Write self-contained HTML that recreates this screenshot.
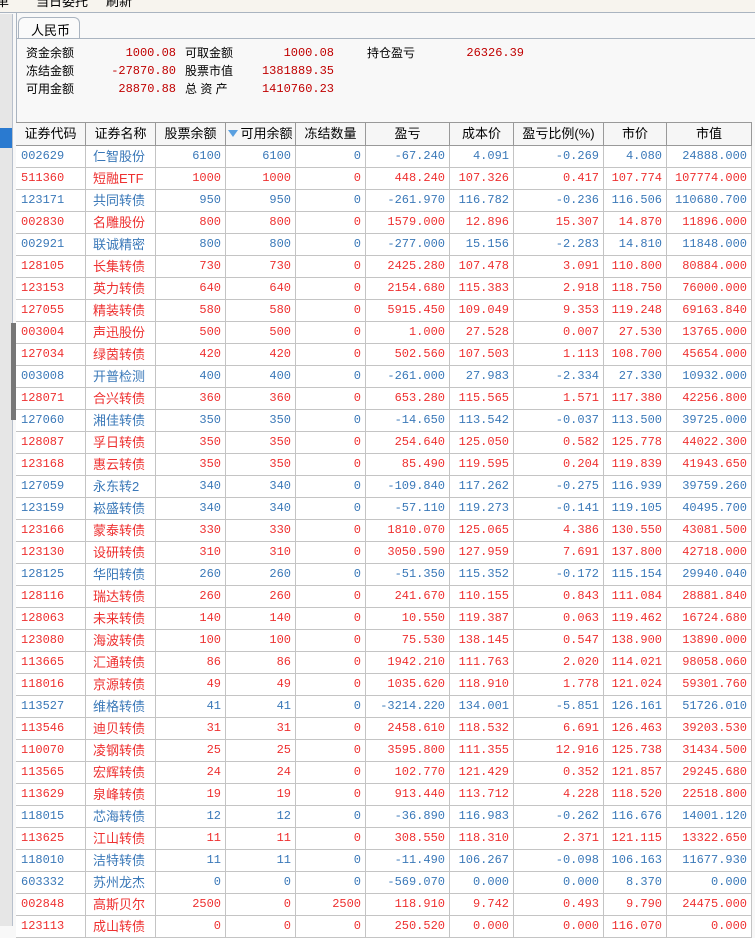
<!DOCTYPE html>
<html><head><meta charset="utf-8"><style>
*{margin:0;padding:0;box-sizing:border-box}
body{width:755px;height:926px;overflow:hidden;background:#f8f8f8;font-family:"Liberation Mono","Noto Sans CJK SC",monospace;font-size:12px;position:relative}
.top{position:absolute;left:0;top:0;width:755px;height:13px;background:#f7f4ee;border-bottom:1px solid #aab4c0;overflow:hidden}
.top span{position:absolute;top:-9px;font-family:"Liberation Sans","Noto Sans CJK SC",sans-serif;font-size:13px;color:#000}
.side{position:absolute;left:0;top:14px;width:13px;height:912px;background:#e6e6e6;border-right:1px solid #b8c0cc}
.blue{position:absolute;left:0;top:114px;width:12px;height:20px;background:#2a7ad0}
.handle{position:absolute;left:11px;top:323px;width:5px;height:97px;background:#777}
.main{position:absolute;left:16px;top:13px;width:739px;height:913px;background:#f8f8f8;border-left:1px solid #aab4c0}
.tab{position:absolute;left:18px;top:17px;width:62px;height:22px;border:1px solid #aab4c0;border-bottom:none;border-radius:6px 6px 0 0;background:#fafafa;font-family:"Liberation Sans","Noto Sans CJK SC",sans-serif;font-size:13px;padding:2px 0 0 12px}
.tabline{position:absolute;left:16px;top:38px;width:739px;height:1px;background:#aab4c0}
.s{position:absolute;font-family:"Liberation Sans","Noto Sans CJK SC",sans-serif;font-size:12px;color:#000;line-height:18px}
.v{position:absolute;color:#c00000;line-height:18px;text-align:right;width:100px}
table{position:absolute;left:16px;top:122px;width:736px;border-collapse:separate;border-spacing:0;table-layout:fixed;background:#fff}
td,th{height:22px;line-height:21px;border-right:1px solid #c4c4c4;border-bottom:1px solid #c4c4c4;white-space:nowrap;overflow:hidden;padding:0 4px;text-align:right;font-weight:normal}
th{background:#f6f6f6;text-align:center;border-top:1px solid #999;border-bottom:1px solid #999;border-right:1px solid #999;height:24px;line-height:22px;font-family:"Liberation Sans","Noto Sans CJK SC",sans-serif;font-size:13px;color:#000;padding:0}
td:nth-child(1){text-align:left;padding-left:5px}
td:nth-child(2){text-align:left;padding-left:7px;font-family:"Liberation Sans","Noto Sans CJK SC",sans-serif;font-size:13px}
tr.b td{color:#3a78b8}
tr.r td{color:#ee3030}
.tri{display:inline-block;width:0;height:0;border-left:5px solid transparent;border-right:5px solid transparent;border-top:7px solid #5aa0e0;margin-right:2px;vertical-align:1px}
</style></head><body>
<div class="top"><span style="left:-4px">单</span><span style="left:36px">当日委托</span><span style="left:106px">刷新</span></div>
<div class="side"><div class="blue"></div></div>
<div class="main"></div>
<div class="handle"></div>
<div class="tab">人民币</div>
<div class="tabline"></div>
<div class="s" style="left:26px;top:44px">资金余额</div><div class="v" style="left:76px;top:44px">1000.08</div>
<div class="s" style="left:185px;top:44px">可取金额</div><div class="v" style="left:234px;top:44px">1000.08</div>
<div class="s" style="left:367px;top:44px">持仓盈亏</div><div class="v" style="left:424px;top:44px;text-align:right">26326.39</div>
<div class="s" style="left:26px;top:62px">冻结金额</div><div class="v" style="left:76px;top:62px">-27870.80</div>
<div class="s" style="left:185px;top:62px">股票市值</div><div class="v" style="left:234px;top:62px">1381889.35</div>
<div class="s" style="left:26px;top:80px">可用金额</div><div class="v" style="left:76px;top:80px">28870.88</div>
<div class="s" style="left:185px;top:80px">总 资 产</div><div class="v" style="left:234px;top:80px">1410760.23</div>
<table>
<colgroup><col style="width:70px"><col style="width:70px"><col style="width:70px"><col style="width:70px"><col style="width:70px"><col style="width:84px"><col style="width:64px"><col style="width:90px"><col style="width:63px"><col style="width:85px"></colgroup>
<tr><th style="width:70px">证券代码</th><th style="width:70px">证券名称</th><th style="width:70px">股票余额</th><th style="width:70px"><span class="tri"></span>可用余额</th><th style="width:70px">冻结数量</th><th style="width:84px">盈亏</th><th style="width:64px">成本价</th><th style="width:90px">盈亏比例(%)</th><th style="width:63px">市价</th><th style="width:85px">市值</th></tr>
<tr class="b"><td>002629</td><td>仁智股份</td><td>6100</td><td>6100</td><td>0</td><td>-67.240</td><td>4.091</td><td>-0.269</td><td>4.080</td><td>24888.000</td></tr>
<tr class="r"><td>511360</td><td>短融ETF</td><td>1000</td><td>1000</td><td>0</td><td>448.240</td><td>107.326</td><td>0.417</td><td>107.774</td><td>107774.000</td></tr>
<tr class="b"><td>123171</td><td>共同转债</td><td>950</td><td>950</td><td>0</td><td>-261.970</td><td>116.782</td><td>-0.236</td><td>116.506</td><td>110680.700</td></tr>
<tr class="r"><td>002830</td><td>名雕股份</td><td>800</td><td>800</td><td>0</td><td>1579.000</td><td>12.896</td><td>15.307</td><td>14.870</td><td>11896.000</td></tr>
<tr class="b"><td>002921</td><td>联诚精密</td><td>800</td><td>800</td><td>0</td><td>-277.000</td><td>15.156</td><td>-2.283</td><td>14.810</td><td>11848.000</td></tr>
<tr class="r"><td>128105</td><td>长集转债</td><td>730</td><td>730</td><td>0</td><td>2425.280</td><td>107.478</td><td>3.091</td><td>110.800</td><td>80884.000</td></tr>
<tr class="r"><td>123153</td><td>英力转债</td><td>640</td><td>640</td><td>0</td><td>2154.680</td><td>115.383</td><td>2.918</td><td>118.750</td><td>76000.000</td></tr>
<tr class="r"><td>127055</td><td>精装转债</td><td>580</td><td>580</td><td>0</td><td>5915.450</td><td>109.049</td><td>9.353</td><td>119.248</td><td>69163.840</td></tr>
<tr class="r"><td>003004</td><td>声迅股份</td><td>500</td><td>500</td><td>0</td><td>1.000</td><td>27.528</td><td>0.007</td><td>27.530</td><td>13765.000</td></tr>
<tr class="r"><td>127034</td><td>绿茵转债</td><td>420</td><td>420</td><td>0</td><td>502.560</td><td>107.503</td><td>1.113</td><td>108.700</td><td>45654.000</td></tr>
<tr class="b"><td>003008</td><td>开普检测</td><td>400</td><td>400</td><td>0</td><td>-261.000</td><td>27.983</td><td>-2.334</td><td>27.330</td><td>10932.000</td></tr>
<tr class="r"><td>128071</td><td>合兴转债</td><td>360</td><td>360</td><td>0</td><td>653.280</td><td>115.565</td><td>1.571</td><td>117.380</td><td>42256.800</td></tr>
<tr class="b"><td>127060</td><td>湘佳转债</td><td>350</td><td>350</td><td>0</td><td>-14.650</td><td>113.542</td><td>-0.037</td><td>113.500</td><td>39725.000</td></tr>
<tr class="r"><td>128087</td><td>孚日转债</td><td>350</td><td>350</td><td>0</td><td>254.640</td><td>125.050</td><td>0.582</td><td>125.778</td><td>44022.300</td></tr>
<tr class="r"><td>123168</td><td>惠云转债</td><td>350</td><td>350</td><td>0</td><td>85.490</td><td>119.595</td><td>0.204</td><td>119.839</td><td>41943.650</td></tr>
<tr class="b"><td>127059</td><td>永东转2</td><td>340</td><td>340</td><td>0</td><td>-109.840</td><td>117.262</td><td>-0.275</td><td>116.939</td><td>39759.260</td></tr>
<tr class="b"><td>123159</td><td>崧盛转债</td><td>340</td><td>340</td><td>0</td><td>-57.110</td><td>119.273</td><td>-0.141</td><td>119.105</td><td>40495.700</td></tr>
<tr class="r"><td>123166</td><td>蒙泰转债</td><td>330</td><td>330</td><td>0</td><td>1810.070</td><td>125.065</td><td>4.386</td><td>130.550</td><td>43081.500</td></tr>
<tr class="r"><td>123130</td><td>设研转债</td><td>310</td><td>310</td><td>0</td><td>3050.590</td><td>127.959</td><td>7.691</td><td>137.800</td><td>42718.000</td></tr>
<tr class="b"><td>128125</td><td>华阳转债</td><td>260</td><td>260</td><td>0</td><td>-51.350</td><td>115.352</td><td>-0.172</td><td>115.154</td><td>29940.040</td></tr>
<tr class="r"><td>128116</td><td>瑞达转债</td><td>260</td><td>260</td><td>0</td><td>241.670</td><td>110.155</td><td>0.843</td><td>111.084</td><td>28881.840</td></tr>
<tr class="r"><td>128063</td><td>未来转债</td><td>140</td><td>140</td><td>0</td><td>10.550</td><td>119.387</td><td>0.063</td><td>119.462</td><td>16724.680</td></tr>
<tr class="r"><td>123080</td><td>海波转债</td><td>100</td><td>100</td><td>0</td><td>75.530</td><td>138.145</td><td>0.547</td><td>138.900</td><td>13890.000</td></tr>
<tr class="r"><td>113665</td><td>汇通转债</td><td>86</td><td>86</td><td>0</td><td>1942.210</td><td>111.763</td><td>2.020</td><td>114.021</td><td>98058.060</td></tr>
<tr class="r"><td>118016</td><td>京源转债</td><td>49</td><td>49</td><td>0</td><td>1035.620</td><td>118.910</td><td>1.778</td><td>121.024</td><td>59301.760</td></tr>
<tr class="b"><td>113527</td><td>维格转债</td><td>41</td><td>41</td><td>0</td><td>-3214.220</td><td>134.001</td><td>-5.851</td><td>126.161</td><td>51726.010</td></tr>
<tr class="r"><td>113546</td><td>迪贝转债</td><td>31</td><td>31</td><td>0</td><td>2458.610</td><td>118.532</td><td>6.691</td><td>126.463</td><td>39203.530</td></tr>
<tr class="r"><td>110070</td><td>凌钢转债</td><td>25</td><td>25</td><td>0</td><td>3595.800</td><td>111.355</td><td>12.916</td><td>125.738</td><td>31434.500</td></tr>
<tr class="r"><td>113565</td><td>宏辉转债</td><td>24</td><td>24</td><td>0</td><td>102.770</td><td>121.429</td><td>0.352</td><td>121.857</td><td>29245.680</td></tr>
<tr class="r"><td>113629</td><td>泉峰转债</td><td>19</td><td>19</td><td>0</td><td>913.440</td><td>113.712</td><td>4.228</td><td>118.520</td><td>22518.800</td></tr>
<tr class="b"><td>118015</td><td>芯海转债</td><td>12</td><td>12</td><td>0</td><td>-36.890</td><td>116.983</td><td>-0.262</td><td>116.676</td><td>14001.120</td></tr>
<tr class="r"><td>113625</td><td>江山转债</td><td>11</td><td>11</td><td>0</td><td>308.550</td><td>118.310</td><td>2.371</td><td>121.115</td><td>13322.650</td></tr>
<tr class="b"><td>118010</td><td>洁特转债</td><td>11</td><td>11</td><td>0</td><td>-11.490</td><td>106.267</td><td>-0.098</td><td>106.163</td><td>11677.930</td></tr>
<tr class="b"><td>603332</td><td>苏州龙杰</td><td>0</td><td>0</td><td>0</td><td>-569.070</td><td>0.000</td><td>0.000</td><td>8.370</td><td>0.000</td></tr>
<tr class="r"><td>002848</td><td>高斯贝尔</td><td>2500</td><td>0</td><td>2500</td><td>118.910</td><td>9.742</td><td>0.493</td><td>9.790</td><td>24475.000</td></tr>
<tr class="r"><td>123113</td><td>成山转债</td><td>0</td><td>0</td><td>0</td><td>250.520</td><td>0.000</td><td>0.000</td><td>116.070</td><td>0.000</td></tr>
</table>
</body></html>
